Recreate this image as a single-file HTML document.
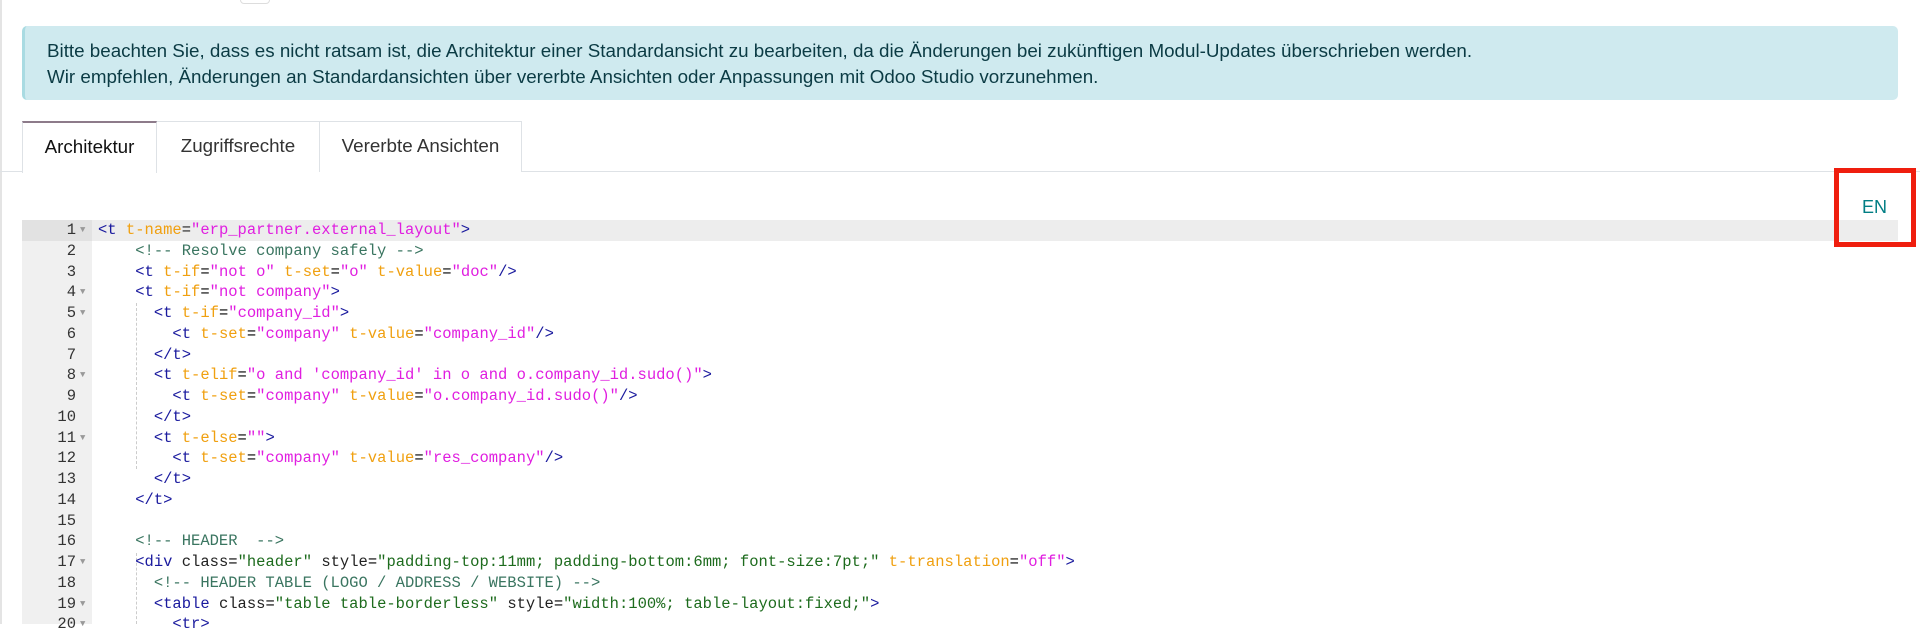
<!DOCTYPE html>
<html><head><meta charset="utf-8"><style>
*{margin:0;padding:0;box-sizing:border-box}
body{width:1920px;height:624px;overflow:hidden;background:#fff;font-family:"Liberation Sans",sans-serif;position:relative}
.lb{position:absolute;left:0;top:0;width:2px;height:624px;background:#e4e4e4}
.alert{position:absolute;left:22px;top:26px;width:1876px;height:74px;background:#cfeaef;border-radius:5px;border-left:3px solid #a9dbe2;color:#0b3b44;font-size:18.8px;padding:12px 0 0 22px;line-height:26px;white-space:nowrap}
.tabline{position:absolute;left:0;top:171px;width:1920px;height:1px;background:#dee2e6}
.tab{position:absolute;top:121px;height:51px;border:1px solid #dee2e6;border-bottom:none;font-size:18.8px;color:#333;line-height:48px;text-align:center;background:#fff}
.t1{left:22px;width:135px;border-top:2px solid #8d7b8a;color:#111;height:52px}
.t2{left:157px;width:163px;border-left:none}
.t3{left:320px;width:202px;border-left:none}
.red{position:absolute;left:1834px;top:168px;width:82px;height:79px;border:5px solid #ef1e0e}
.en{position:absolute;left:1862px;top:197px;font-size:18px;color:#017e84}
.gut{position:absolute;left:22px;top:220px;width:70px;height:404px;background:#f0f0f0}
.act{position:absolute;left:92px;top:220px;width:1806px;height:21px;background:#ededed}
.actg{position:absolute;left:22px;top:220px;width:70px;height:21px;background:#e2e2e2}
.code{position:absolute;left:22px;top:220px;font-family:"Liberation Mono","DejaVu Sans Mono",monospace;font-size:15.5px;line-height:20.75px;white-space:pre}
.ln{display:block;height:20.75px}
.n{display:inline-block;width:54px;text-align:right;color:#333}
.f{display:inline-block;width:22px;color:#999;font-size:9px;text-align:left;padding-left:4px;vertical-align:top}
.g{color:#1a1a9e}.a{color:#f0a010}.v{color:#e01ee0}.c{color:#3a7560}.s{color:#1d6b1d}.k{color:#222}
.guide{position:absolute;border-left:1px dashed #ccc}
</style></head><body>
<div class="lb"></div>
<div style="position:absolute;left:240px;top:-8px;width:30px;height:12px;border:1px solid #ddd;border-radius:4px"></div>
<div class="alert">Bitte beachten Sie, dass es nicht ratsam ist, die Architektur einer Standardansicht zu bearbeiten, da die Änderungen bei zukünftigen Modul-Updates überschrieben werden.<br>Wir empfehlen, Änderungen an Standardansichten über vererbte Ansichten oder Anpassungen mit Odoo Studio vorzunehmen.</div>
<div class="tabline"></div>
<div class="tab t1">Architektur</div>
<div class="tab t2">Zugriffsrechte</div>
<div class="tab t3">Vererbte Ansichten</div>
<div class="gut"></div><div class="actg"></div><div class="act"></div>
<div class="guide" style="left:136px;top:303px;height:166px"></div>
<div class="guide" style="left:136px;top:553px;height:71px"></div>
<div class="code"><span class="ln"><span class="n">1</span><span class="f">▼</span><span class="g">&lt;t</span> <span class="a">t-name</span><span class="k">=</span><span class="v">"erp_partner.external_layout"</span><span class="g">&gt;</span></span><span class="ln"><span class="n">2</span><span class="f"></span>    <span class="c">&lt;!-- Resolve company safely --&gt;</span></span><span class="ln"><span class="n">3</span><span class="f"></span>    <span class="g">&lt;t</span> <span class="a">t-if</span>=<span class="v">"not o"</span> <span class="a">t-set</span>=<span class="v">"o"</span> <span class="a">t-value</span>=<span class="v">"doc"</span><span class="g">/&gt;</span></span><span class="ln"><span class="n">4</span><span class="f">▼</span>    <span class="g">&lt;t</span> <span class="a">t-if</span>=<span class="v">"not company"</span><span class="g">&gt;</span></span><span class="ln"><span class="n">5</span><span class="f">▼</span>      <span class="g">&lt;t</span> <span class="a">t-if</span>=<span class="v">"company_id"</span><span class="g">&gt;</span></span><span class="ln"><span class="n">6</span><span class="f"></span>        <span class="g">&lt;t</span> <span class="a">t-set</span>=<span class="v">"company"</span> <span class="a">t-value</span>=<span class="v">"company_id"</span><span class="g">/&gt;</span></span><span class="ln"><span class="n">7</span><span class="f"></span>      <span class="g">&lt;/t&gt;</span></span><span class="ln"><span class="n">8</span><span class="f">▼</span>      <span class="g">&lt;t</span> <span class="a">t-elif</span>=<span class="v">"o and 'company_id' in o and o.company_id.sudo()"</span><span class="g">&gt;</span></span><span class="ln"><span class="n">9</span><span class="f"></span>        <span class="g">&lt;t</span> <span class="a">t-set</span>=<span class="v">"company"</span> <span class="a">t-value</span>=<span class="v">"o.company_id.sudo()"</span><span class="g">/&gt;</span></span><span class="ln"><span class="n">10</span><span class="f"></span>      <span class="g">&lt;/t&gt;</span></span><span class="ln"><span class="n">11</span><span class="f">▼</span>      <span class="g">&lt;t</span> <span class="a">t-else</span>=<span class="v">""</span><span class="g">&gt;</span></span><span class="ln"><span class="n">12</span><span class="f"></span>        <span class="g">&lt;t</span> <span class="a">t-set</span>=<span class="v">"company"</span> <span class="a">t-value</span>=<span class="v">"res_company"</span><span class="g">/&gt;</span></span><span class="ln"><span class="n">13</span><span class="f"></span>      <span class="g">&lt;/t&gt;</span></span><span class="ln"><span class="n">14</span><span class="f"></span>    <span class="g">&lt;/t&gt;</span></span><span class="ln"><span class="n">15</span><span class="f"></span></span><span class="ln"><span class="n">16</span><span class="f"></span>    <span class="c">&lt;!-- HEADER  --&gt;</span></span><span class="ln"><span class="n">17</span><span class="f">▼</span>    <span class="g">&lt;div</span> <span class="k">class</span>=<span class="s">"header"</span> <span class="k">style</span>=<span class="s">"padding-top:11mm; padding-bottom:6mm; font-size:7pt;"</span> <span class="a">t-translation</span>=<span class="v">"off"</span><span class="g">&gt;</span></span><span class="ln"><span class="n">18</span><span class="f"></span>      <span class="c">&lt;!-- HEADER TABLE (LOGO / ADDRESS / WEBSITE) --&gt;</span></span><span class="ln"><span class="n">19</span><span class="f">▼</span>      <span class="g">&lt;table</span> <span class="k">class</span>=<span class="s">"table table-borderless"</span> <span class="k">style</span>=<span class="s">"width:100%; table-layout:fixed;"</span><span class="g">&gt;</span></span><span class="ln"><span class="n">20</span><span class="f">▼</span>        <span class="g">&lt;tr&gt;</span></span></div>
<div class="red"></div>
<div class="en">EN</div>
</body></html>
